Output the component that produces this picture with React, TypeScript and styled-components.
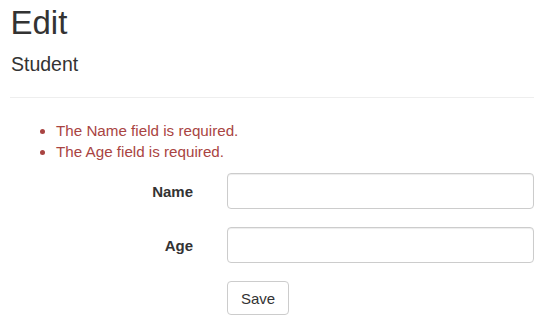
import React from "react";
import styled, { createGlobalStyle } from "styled-components";

const GlobalStyle = createGlobalStyle`
  html, body {
    margin: 0;
    padding: 0;
    background: #ffffff;
  }
  body {
    font-family: "Liberation Sans", Arial, Helvetica, sans-serif;
    font-size: 15px;
    line-height: 21px;
    color: #333333;
  }
  * { box-sizing: border-box; }
`;

const Page = styled.div`
  padding: 5px 11px 0 10px;
`;

const Title = styled.h2`
  margin: 0 0 11px;
  padding-left: 0.5px;
  font-size: 33px;
  line-height: 36px;
  font-weight: 500;
`;

const Subtitle = styled.h4`
  margin: 12px 0 0;
  padding-left: 1px;
  font-size: 19.5px;
  line-height: 22px;
  font-weight: 500;
`;

const Rule = styled.hr`
  margin: 22px 0;
  border: 0;
  border-top: 1px solid #eeeeee;
  height: 0;
`;

const ErrorList = styled.ul`
  margin: 0 0 11px;
  padding-left: 46px;
  color: #a94442;
  font-size: 15.2px;
`;

const ErrorItem = styled.li`
  line-height: 21px;
`;

const Form = styled.form`
  display: grid;
  grid-template-columns: 183px 1fr;
  column-gap: 34px;
  row-gap: 18px;
  align-items: center;
`;

const Label = styled.label`
  justify-self: end;
  font-weight: 700;
`;

const Input = styled.input`
  display: block;
  width: 100%;
  height: 36px;
  padding: 6px 12px;
  font: inherit;
  color: #555555;
  background: #ffffff;
  border: 1px solid #cccccc;
  border-radius: 4px;
  box-shadow: inset 0 1px 1px rgba(0, 0, 0, 0.075);
  outline: none;
`;

const Button = styled.button<{ $col?: number }>`
  grid-column: ${(p) => p.$col ?? 2};
  justify-self: start;
  width: 62px;
  height: 34px;
  padding: 0;
  font: inherit;
  color: #333333;
  background: #ffffff;
  border: 1px solid #cccccc;
  border-radius: 4px;
  cursor: pointer;
`;

const errors = ["The Name field is required.", "The Age field is required."];
const fields = [
  { id: "Name", label: "Name" },
  { id: "Age", label: "Age" },
];

export default function App() {
  return (
    <>
      <GlobalStyle />
      <Page>
        <Title>Edit</Title>
        <Subtitle>Student</Subtitle>
        <Rule />
        <ErrorList>
          {errors.map((e) => (
            <ErrorItem key={e}>{e}</ErrorItem>
          ))}
        </ErrorList>
        <Form onSubmit={(e) => e.preventDefault()}>
          {fields.map((f) => (
            <React.Fragment key={f.id}>
              <Label htmlFor={f.id}>{f.label}</Label>
              <Input id={f.id} type="text" />
            </React.Fragment>
          ))}
          <Button type="submit">Save</Button>
        </Form>
      </Page>
    </>
  );
}
